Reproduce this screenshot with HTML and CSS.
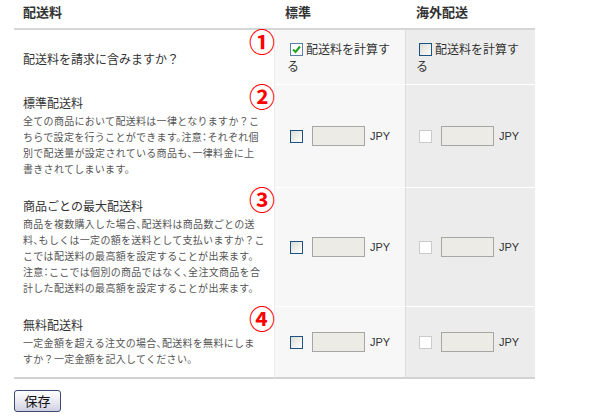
FILE: index.html
```html
<!DOCTYPE html>
<html lang="ja">
<head>
  <meta charset="UTF-8">
  <title>配送料設定</title>
  <link rel="stylesheet" href="styles.css">
</head>
<body>
<form class="shipping">
  <table class="ship-table">
    <colgroup>
      <col class="w-label">
      <col class="w-std">
      <col class="w-intl">
    </colgroup>
    <thead>
      <tr>
        <th class="h-label">配送料</th>
        <th class="h-std">標準</th>
        <th class="h-intl">海外配送</th>
      </tr>
    </thead>
    <tbody>
      <tr>
        <td class="label">
          <span class="mark">①</span>
          <span class="question">配送料を請求に含みますか？</span>
        </td>
        <td class="std">
          <label class="calc"><span class="cb checked"><svg viewBox="0 0 11 11" width="11" height="11"><path d="M2 5.5 L4.5 8 L9 2.5" fill="none" stroke="#22a322" stroke-width="2"/></svg></span>配送料を計算する</label>
        </td>
        <td class="intl">
          <label class="calc"><span class="cb"></span>配送料を計算する</label>
        </td>
      </tr>
      <tr>
        <td class="label">
          <span class="mark">②</span>
          <div class="title">標準配送料</div>
          <div class="desc">全ての商品において配送料は一律となりますか？こ<br>ちらで設定を行うことができます。注意：それぞれ個<br>別で配送量が設定されている商品も、一律料金に上<br>書きされてしまいます。</div>
        </td>
        <td class="std">
          <div class="amount"><span class="cb"></span><span class="field"></span><span class="cur">JPY</span></div>
        </td>
        <td class="intl">
          <div class="amount"><span class="cb off"></span><span class="field"></span><span class="cur">JPY</span></div>
        </td>
      </tr>
      <tr>
        <td class="label">
          <span class="mark">③</span>
          <div class="title">商品ごとの最大配送料</div>
          <div class="desc">商品を複数購入した場合、配送料は商品数ごとの送<br>料、もしくは一定の額を送料として支払いますか？こ<br>こでは配送料の最高額を設定することが出来ます。<br>注意：ここでは個別の商品ではなく、全注文商品を合<br>計した配送料の最高額を設定することが出来ます。</div>
        </td>
        <td class="std">
          <div class="amount"><span class="cb"></span><span class="field"></span><span class="cur">JPY</span></div>
        </td>
        <td class="intl">
          <div class="amount"><span class="cb off"></span><span class="field"></span><span class="cur">JPY</span></div>
        </td>
      </tr>
      <tr class="last">
        <td class="label">
          <span class="mark">④</span>
          <div class="title">無料配送料</div>
          <div class="desc">一定金額を超える注文の場合、配送料を無料にしま<br>すか？一定金額を記入してください。</div>
        </td>
        <td class="std">
          <div class="amount"><span class="cb"></span><span class="field"></span><span class="cur">JPY</span></div>
        </td>
        <td class="intl">
          <div class="amount"><span class="cb off"></span><span class="field"></span><span class="cur">JPY</span></div>
        </td>
      </tr>
    </tbody>
  </table>
  <button type="submit" class="save">保存</button>
</form>
</body>
</html>
```

FILE: styles.css
```css
body {
  margin: 0;
  font-family: "Noto Sans CJK JP", sans-serif;
  color: #333;
  background-color: #fff;
}
.shipping {
  padding: 0 14px;
}
.ship-table {
  width: 521px;
  table-layout: fixed;
  border-spacing: 0;
}
.w-label {
  width: 260px;
}
.w-std {
  width: 131px;
}
.w-intl {
  width: 130px;
}
th {
  height: 22px;
  padding: 0 0 6px 11px;
  text-align: left;
  font-size: 13px;
  font-weight: bold;
  border-bottom: 2px solid #d6d6d6;
}
th.h-label {
  padding-left: 9px;
}
td {
  padding: 10px 8px 10px 12px;
  vertical-align: middle;
  border-bottom: 1px solid #fff;
}
tr.last td {
  border-bottom: 2px solid #d2d2d2;
}
td.label {
  position: relative;
  padding: 10px 15px 10px 9px;
}
td.std {
  background-color: #f7f7f7;
  border-left: 1px solid #ececec;
}
td.intl {
  background-color: #ececec;
  border-left: 1px solid #dcdcdc;
  padding-left: 10px;
}
.mark {
  position: absolute;
  top: -2px;
  right: -1px;
  font-size: 26px;
  line-height: 26px;
  font-weight: bold;
  color: #f00;
}
.question {
  font-size: 12px;
  line-height: 16px;
}
.title {
  font-size: 12px;
  line-height: 16px;
  margin-bottom: 2px;
}
.desc {
  font-size: 10px;
  line-height: 16px;
  letter-spacing: 0.3px;
  white-space: nowrap;
  color: #555;
  font-feature-settings: "halt";
}
.calc {
  display: block;
  font-size: 12px;
  line-height: 17px;
}
.cb {
  display: inline-block;
  box-sizing: border-box;
  width: 13px;
  height: 13px;
  margin: 0 3px 0 3px;
  border: 1px solid #1c5180;
  background: linear-gradient(135deg, #dcdcd6, #fff);
  vertical-align: -2px;
}
.cb svg {
  display: block;
}
.cb.checked {
  border-color: #5b7fa6;
  background: #fff;
}
.cb.off {
  border-color: #cbcbcb;
  background: #fff;
}
.amount {
  display: flex;
  align-items: center;
}
.amount .cb {
  margin-right: 9px;
}
.field {
  display: inline-block;
  box-sizing: border-box;
  width: 53px;
  height: 20px;
  border: 1px solid #a6a6a6;
  background-color: #ecebe6;
}
.cur {
  margin-left: 5px;
  font-family: "Liberation Sans", Arial, sans-serif;
  font-size: 11px;
  color: #333;
}
.save {
  margin-top: 11px;
  width: 47px;
  height: 22px;
  padding: 0;
  font-family: "Noto Sans CJK JP", sans-serif;
  font-size: 13px;
  line-height: 18px;
  color: #111;
  border: 1px solid #3a4a72;
  border-radius: 3px;
  background: linear-gradient(#ffffff, #e6e6f0 60%, #cfcfe2);
  cursor: pointer;
}
```
